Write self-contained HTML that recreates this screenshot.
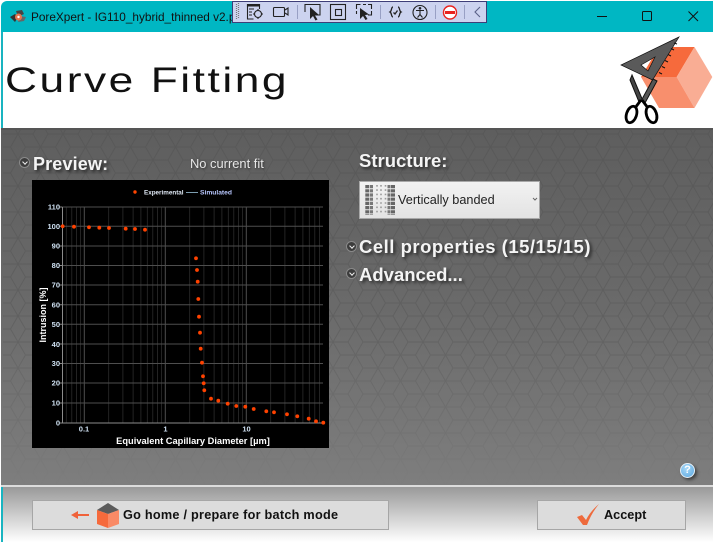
<!DOCTYPE html>
<html><head><meta charset="utf-8"><style>
*{margin:0;padding:0;box-sizing:border-box}
html,body{width:713px;height:542px;overflow:hidden;background:#fff;font-family:"Liberation Sans",sans-serif}
.a{position:absolute;white-space:nowrap}
.h{color:#f4f4f4;font-weight:bold;text-shadow:2px 2px 3px rgba(0,0,0,.65)}
.btn{position:absolute;background:#dcdcdc;border:1px solid #a6a6a6;top:500px;height:30px}
.exp{position:absolute;width:11px;height:11px;border-radius:50%;background:#3c3c3c;border:1px solid #8a8a8a}
.exp:after{content:"";position:absolute;left:2.500px;top:2px;width:3px;height:3px;border-right:1px solid #eee;border-bottom:1px solid #eee;transform:rotate(45deg)}
</style></head><body>
<div class="a" style="left:1px;top:1px;width:712px;height:31px;background:#00b7c3;border-top-left-radius:6px"></div>
<div class="a" style="left:1px;top:32px;width:2px;height:510px;background:#19b4c0"></div>
<div class="a" style="left:3px;top:32px;width:710px;height:96px;background:#fff"></div>
<svg class="a" style="left:9px;top:8px" width="18" height="18" viewBox="0 0 18 18"><path d="M1 9l5-3 3 3-3 5z" fill="#333"/><path d="M7 3l6-1 2 4-6 3z" fill="#444"/><path d="M9 14l6-1 2-4-6-1z" fill="#666"/><circle cx="9.500" cy="9" r="3.500" fill="#e8744e"/><circle cx="9.500" cy="9" r="1.200" fill="#fff"/></svg>
<div class="a" style="left:31px;top:9px;width:201px;overflow:hidden;font-size:11.800px;line-height:16px;color:#111">PoreXpert - IG110_hybrid_thinned v2.pxp</div>

<svg class="a" style="left:231px;top:0" width="257" height="24" viewBox="231 0 257 24">
<rect x="232.500" y="1.500" width="254" height="21" fill="#ccd3ef" stroke="#3e3e78"/>
<path d="M236.500 4v16M238.500 3v16" stroke="#777" stroke-width="1.200" stroke-dasharray="1 1"/>
<g fill="none" stroke="#222" stroke-width="1.100">
<path d="M247.500 10V4.500h12V9"/><path d="M247.500 4.500h12v1.500h-12z" fill="#222"/><path d="M247.500 10v9h6M249 9h5M249 12h3M249 15h3"/><circle cx="258" cy="14" r="3.500"/><path d="M258 9v2M258 17v2M253 14h2M261 14h2"/>
<rect x="273.500" y="7.500" width="11" height="9" rx="1"/><path d="M285 10l3-2v7l-3-2"/>
<path d="M305 12V4.500h15V15h-7"/><rect x="330.500" y="4.500" width="15" height="15"/><rect x="335.500" y="9.500" width="6" height="6"/>
<path d="M356.500 9V4.500h4M363 4.500h3M368 4.500h3.500V9M371.500 11v4H368M356.500 11v3"/>
<circle cx="420" cy="12.500" r="7"/><path d="M416 10.500h8M420 10.500v4M420 14.500l-2.500 3M420 14.500l2.500 3"/>
<path d="M480 7l-5 5 5 5" stroke="#5a6288"/>
<path d="M393 7c-2 0-1 4-3 5 2 1 1 5 3 5M398 7c2 0 1 4 3 5-2 1-1 5-3 5" stroke-width="1.300"/><path d="M393.500 12.500l1.500 1.500 2.500-3.500" stroke-width="1.300"/>
</g>
<path d="M310 7l0 12 3-3 2.500 4.500 2-1-2.500-4 4-.5z" fill="#222"/><path d="M360 8l0 11 3-3 2.500 4 2-1-2.500-4 4-.5z" fill="#222"/>
<circle cx="420" cy="8.300" r="1.300" fill="#222"/>
<path d="M297.500 5v14M380.500 5v14M435.500 5v14M464.500 5v14" stroke="#98a0c4"/>
<circle cx="450" cy="12.500" r="6.500" fill="#fff" stroke="#e8231f" stroke-width="1.400"/><rect x="445" y="11" width="10" height="3" fill="#e8231f"/>
</svg>

<svg class="a" style="left:590px;top:5px" width="120" height="22" viewBox="590 5 120 22" fill="none" stroke="#111">
<path d="M597 16.500h10"/><rect x="642.500" y="11.500" width="9" height="9" rx="1"/><path d="M688.500 11.500l9.500 9.500M698 11.500l-9.500 9.500"/></svg>

<div class="a" style="left:5px;top:56px;font-size:35px;line-height:50px;color:#111;font-weight:normal;transform-origin:0 0;transform:scaleX(1.266);letter-spacing:2px">Curve Fitting</div>

<svg class="a" style="left:615px;top:32px" width="98" height="96" viewBox="615 32 98 96">
<path d="M676.700 77L694.500 47H659L641 77z" fill="#f66a3c"/>
<path d="M676.700 77L694.500 47 712.300 77 694.500 108z" fill="#f9ad94"/>
<path d="M676.700 77L694.500 108H659L641 77z" fill="#f88f6d"/>
<path fill-rule="evenodd" d="M679 37L621 65l31.500 15zM641 65l14-8-7 14z" fill="#5a5a5a" stroke="#111" stroke-width=".7"/>
<path d="M677 44l-3-1M674 50l-3-1.500M671 56l-3-1.500M668 62l-3-1.500M665 68l-3-1.500M662 74l-3-1.500" stroke="#111"/>
<path d="M632 75l-2 5 9 22 4-1z" fill="#444" stroke="#111"/>
<path d="M653 79l4 2-12 22-4-2z" fill="#555" stroke="#111"/>
<g fill="none" stroke="#000" stroke-width="2.800"><path d="M642 100l6 8M641 100l-6 8"/><ellipse cx="631.500" cy="114.500" rx="5" ry="8.500" transform="rotate(18 631.500 114.500)"/><ellipse cx="651.500" cy="114.500" rx="5" ry="8.500" transform="rotate(-18 651.500 114.500)"/></g>
</svg>

<div class="a" style="left:1px;top:128px;width:712px;height:357px;background:linear-gradient(#5e5e5e,#6a6a6a 50%,#7e7e7e)"></div>
<svg class="a" style="left:3px;top:128px;-webkit-mask-image:linear-gradient(#000 55%,rgba(0,0,0,.25) 90%,transparent);mask-image:linear-gradient(#000 55%,rgba(0,0,0,.25) 90%,transparent)" width="710" height="357">
<defs><pattern id="p" width="45" height="26" patternUnits="userSpaceOnUse" x="22.500" y="19">
<path d="M15 0H30L37.500 13 30 26H15L7.500 13zM0 13H7.500M37.500 13H45M15 0L22.500 13 15 26M22.500 13H37.500M0 0H15M15 26H0M37.500 13L45 0M37.500 13L45 26" fill="none" stroke="#4c4c4c" stroke-opacity=".32" stroke-width="1"/></pattern></defs>
<rect width="710" height="357" fill="url(#p)"/></svg>
<div class="a" style="left:1px;top:128px;width:712px;height:2px;background:#555"></div>

<div class="exp" style="left:19px;top:157px"></div>
<div class="a h" style="left:33px;top:153px;font-size:18px;line-height:22px;letter-spacing:.15px">Preview:</div>
<div class="a" style="left:190px;top:156px;font-size:12.900px;line-height:16px;color:#e6e6e6;text-shadow:1px 1px 2px rgba(0,0,0,.5)">No current fit</div>

<svg class="a" style="left:32px;top:180px;font-family:'Liberation Sans',sans-serif" width="297" height="268" viewBox="32 180 297 268">
<rect x="32" y="180" width="297" height="268" fill="#000"/>
<path d="M66.300 207V423M71.800 207V423M76.500 207V423M80.400 207V423M108.700 207V423M122.900 207V423M133.100 207V423M140.900 207V423M147.300 207V423M152.800 207V423M157.500 207V423M161.400 207V423M189.700 207V423M203.900 207V423M214.100 207V423M221.900 207V423M228.300 207V423M233.800 207V423M238.500 207V423M242.400 207V423M270.700 207V423M284.900 207V423M295.100 207V423M302.900 207V423M309.300 207V423M314.800 207V423M319.500 207V423" stroke="#2c2c2c" stroke-width=".8"/>
<path d="M84.300 207V423M165.300 207V423M246.300 207V423M62 207H323M62 226.300H323M62 246H323M62 265.500H323M62 285H323M62 304.700H323M62 324.300H323M62 344H323M62 363.500H323M62 383H323M62 403H323" stroke="#4e4e4e" stroke-width="1"/>
<path d="M62.500 207V423H323" stroke="#8c8c8c" stroke-width="1" fill="none"/>
<path d="M59 207h3M59 226.300h3M59 246h3M59 265.500h3M59 285h3M59 304.700h3M59 324.300h3M59 344h3M59 363.500h3M59 383h3M59 403h3M59 423h3" stroke="#888"/>
<g fill="#cfe1f2" font-size="7.500" text-anchor="end" font-weight="bold">
<text x="60" y="209.500">110</text><text x="60" y="229">100</text><text x="60" y="248.500">90</text><text x="60" y="268">80</text><text x="60" y="287.500">70</text><text x="60" y="307.500">60</text><text x="60" y="327">50</text><text x="60" y="347">40</text><text x="60" y="366">30</text><text x="60" y="385.500">20</text><text x="60" y="405.500">10</text><text x="60" y="425.500">0</text></g>
<g fill="#cfe1f2" font-size="7.500" text-anchor="middle" font-weight="bold"><text x="84" y="431.500">0.1</text><text x="165.500" y="431.500">1</text><text x="246.500" y="431.500">10</text></g>
<text x="193" y="444" fill="#fff" font-size="9.300" font-weight="bold" text-anchor="middle">Equivalent Capillary Diameter [µm]</text>
<text transform="translate(46,315) rotate(-90)" fill="#fff" font-size="9" font-weight="bold" text-anchor="middle">Intrusion [%]</text>
<circle cx="135" cy="192" r="1.700" fill="#ff4500"/>
<text x="144" y="194.500" fill="#dfe8f5" font-size="6.300" font-weight="bold">Experimental</text>
<path d="M186 192.500h12" stroke="#7d9db0"/>
<text x="200" y="194.500" fill="#b9c8ff" font-size="6.700" font-weight="bold">Simulated</text>
<g fill="#ff4200">
<circle cx="62.700" cy="226.300" r="1.900"/><circle cx="74" cy="226.700" r="1.900"/><circle cx="89" cy="227.300" r="1.900"/><circle cx="99.300" cy="227.700" r="1.900"/><circle cx="109" cy="228" r="1.900"/><circle cx="125.700" cy="228.700" r="1.900"/><circle cx="135" cy="229" r="1.900"/><circle cx="145" cy="229.700" r="1.900"/><circle cx="196" cy="258.300" r="1.900"/><circle cx="197" cy="270" r="1.900"/><circle cx="197.700" cy="281.700" r="1.900"/><circle cx="198.300" cy="299" r="1.900"/><circle cx="199" cy="316.700" r="1.900"/><circle cx="200" cy="332.700" r="1.900"/><circle cx="200.700" cy="348.700" r="1.900"/><circle cx="202" cy="362.700" r="1.900"/><circle cx="203" cy="376.300" r="1.900"/><circle cx="203.700" cy="383.300" r="1.900"/><circle cx="204.300" cy="390.300" r="1.900"/><circle cx="211" cy="398.700" r="1.900"/><circle cx="218.300" cy="400.700" r="1.900"/><circle cx="227.700" cy="403.700" r="1.900"/><circle cx="236.300" cy="406" r="1.900"/><circle cx="245.300" cy="406.700" r="1.900"/><circle cx="253.700" cy="409" r="1.900"/><circle cx="266.300" cy="411.300" r="1.900"/><circle cx="274" cy="412.300" r="1.900"/><circle cx="287" cy="414.300" r="1.900"/><circle cx="297.300" cy="416.300" r="1.900"/><circle cx="308.700" cy="418.700" r="1.900"/><circle cx="316" cy="421.300" r="1.900"/><circle cx="323.300" cy="422.700" r="1.900"/>
</g></svg>

<div class="a h" style="left:359px;top:150px;font-size:18.500px;line-height:22px">Structure:</div>
<div class="a" style="left:359px;top:181px;width:181px;height:38px;background:linear-gradient(#f2f2f2,#e3e3e3);border:1px solid #a8a8a8"></div>
<svg class="a" style="left:365px;top:185px" width="31" height="30" viewBox="365 185 31 30" fill="none" stroke="#666">
<path d="M367.300 185v30M393 185v30" stroke-width="4" stroke-dasharray="3.200 1"/><path d="M371.500 185v30M389 185v30" stroke-width="3" stroke-dasharray="3.200 1" stroke="#777"/><path d="M377 185v30M381 185v30M385.500 185v30" stroke-width="1.600" stroke-dasharray="1.600 2.700" stroke="#999"/></svg>
<div class="a" style="left:398px;top:192px;font-size:12.700px;line-height:16px;color:#222">Vertically banded</div>
<svg class="a" style="left:532px;top:197px" width="6" height="5"><path d="M1 1l2 2 2-2" fill="none" stroke="#666"/></svg>

<div class="exp" style="left:346px;top:241px"></div>
<div class="a h" style="left:359px;top:236px;font-size:18.500px;line-height:22px;letter-spacing:.5px">Cell properties (15/15/15)</div>
<div class="exp" style="left:346px;top:268px"></div>
<div class="a h" style="left:359px;top:264px;font-size:18.500px;line-height:22px">Advanced...</div>

<div class="a" style="left:680px;top:463px;width:15px;height:15px;border-radius:50%;background:radial-gradient(circle at 40% 35%,#a8d8f8,#5aa8e0);border:1px solid #e4eef6;box-shadow:2px 2px 3px rgba(0,0,0,.5);color:#fff;font-weight:bold;font-size:11px;line-height:13px;text-align:center">?</div>

<div class="a" style="left:1px;top:485px;width:712px;height:2px;background:#dcdcdc"></div>
<div class="a" style="left:3px;top:487px;width:710px;height:55px;background:linear-gradient(#999,#fff)"></div>
<div class="a" style="left:1px;top:487px;width:2px;height:55px;background:#19b4c0"></div>

<div class="btn" style="left:32px;width:357px"></div>
<svg class="a" style="left:70px;top:502px" width="50" height="28" viewBox="70 502 50 28">
<path d="M89 514h-11v-3l-7 4 7 4v-3h11z" fill="#f0623a"/>
<path d="M97 510l11-7 11 7-11 4z" fill="#5b5b5b"/><path d="M97 510v14l11 4v-14z" fill="#f66a3c"/><path d="M119 510v14l-11 4v-14z" fill="#f98a66"/></svg>
<div class="a" style="left:123px;top:507px;font-size:12.700px;line-height:16px;font-weight:bold;color:#111;letter-spacing:.25px">Go home / prepare for batch mode</div>
<div class="btn" style="left:537px;width:149px"></div>
<svg class="a" style="left:575px;top:502px" width="28" height="26" viewBox="575 502 28 26"><path d="M577 517l5-2 4 5c3-6 7-11 13-16-5 6-9 13-12 21h-4z" fill="#ee6a3c"/></svg>
<div class="a" style="left:604px;top:507px;font-size:12.700px;line-height:16px;font-weight:bold;color:#111">Accept</div>
</body></html>
